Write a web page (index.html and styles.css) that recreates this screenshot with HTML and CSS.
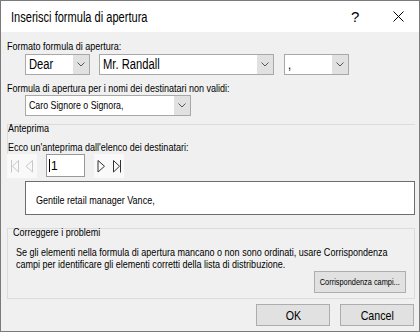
FILE: index.html
```html
<!DOCTYPE html>
<html lang="it">
<head>
  <meta charset="UTF-8">
  <title>Inserisci formula di apertura</title>
  <link rel="stylesheet" href="styles.css">
</head>
<body>

<div class="dialog">
  <div class="titlebar">
    <span class="title t">Inserisci formula di apertura</span>
    <span class="help">?</span>
    <svg class="close" width="11" height="11" viewBox="0 0 11 11">
      <path d="M0.5 0.5 L10.5 10.5 M10.5 0.5 L0.5 10.5" stroke="#000" stroke-width="1" fill="none"/>
    </svg>
  </div>

  <div class="content">
    <div class="label first-label"><span class="t">Formato formula di apertura:</span></div>
    <div class="combo-row">
      <div class="combo combo-dear">
        <span class="combo-text"><span class="t">Dear</span></span>
        <span class="combo-arrow"><svg width="8" height="5" viewBox="0 0 8 5"><path d="M0.5 0.5 L4 4 L7.5 0.5" stroke="#555" fill="none"/></svg></span>
      </div>
      <div class="combo combo-name">
        <span class="combo-text"><span class="t">Mr. Randall</span></span>
        <span class="combo-arrow"><svg width="8" height="5" viewBox="0 0 8 5"><path d="M0.5 0.5 L4 4 L7.5 0.5" stroke="#555" fill="none"/></svg></span>
      </div>
      <div class="combo combo-punct">
        <span class="combo-text"><span class="t">,</span></span>
        <span class="combo-arrow"><svg width="8" height="5" viewBox="0 0 8 5"><path d="M0.5 0.5 L4 4 L7.5 0.5" stroke="#555" fill="none"/></svg></span>
      </div>
    </div>

    <div class="label second-label"><span class="t">Formula di apertura per i nomi dei destinatari non validi:</span></div>
    <div class="combo combo-invalid">
      <span class="combo-text small"><span class="t">Caro Signore o Signora,</span></span>
      <span class="combo-arrow"><svg width="8" height="5" viewBox="0 0 8 5"><path d="M0.5 0.5 L4 4 L7.5 0.5" stroke="#555" fill="none"/></svg></span>
    </div>

    <div class="preview-group">
      <div class="preview-head">
        <div class="group-title"><span class="t">Anteprima</span></div>
        <div class="label preview-label"><span class="t">Ecco un'anteprima dall'elenco dei destinatari:</span></div>
      </div>
      <div class="nav-row">
        <svg class="nav-btns" width="30" height="24" viewBox="0 0 30 24">
          <path d="M4.5 6 V18.5 M11.5 6.5 L5.5 12.25 L11.5 18 Z M25.5 6.5 L19 12.25 L25.5 18 Z" stroke="#c8c8c8" fill="none"/>
        </svg>
        <div class="record-box"><span class="caret"></span>1</div>
        <svg class="nav-btns" width="30" height="24" viewBox="0 0 30 24">
          <path d="M4 6.5 L10.5 12.25 L4 18 Z M19.5 6.5 L25.5 12.25 L19.5 18 Z M26.5 6 V18.5" stroke="#333" fill="none"/>
        </svg>
      </div>
      <div class="preview-box"><span class="t">Gentile retail manager Vance,</span></div>
    </div>

    <div class="fix-group">
      <div class="group-title fix-title"><span class="t">Correggere i problemi</span></div>
      <div class="fix-text">
        <span class="t">Se gli elementi nella formula di apertura mancano o non sono ordinati, usare Corrispondenza</span>
        <span class="t">campi per identificare gli elementi corretti della lista di distribuzione.</span>
      </div>
      <div class="fix-actions">
        <button class="btn btn-small"><span class="t">Corrispondenza campi...</span></button>
      </div>
    </div>

    <div class="dialog-buttons">
      <button class="btn"><span class="t">OK</span></button>
      <button class="btn"><span class="t">Cancel</span></button>
    </div>
  </div>
</div>

</body>
</html>
```

FILE: styles.css
```css
body {
  margin: 0;
  font-family: "Liberation Sans", Arial, sans-serif;
  color: #000;
}

/* the dialog text is a narrow face: squeeze the glyphs horizontally */
.t {
  display: inline-block;
  white-space: nowrap;
  transform: scaleX(0.82);
  transform-origin: 0 50%;
}

.dialog {
  width: 420px;
  height: 332px;
  box-sizing: border-box;
  border: 1px solid #7a7a7a;
  background: #f0f0f0;
  display: flex;
  flex-direction: column;
  overflow: hidden;
}

.titlebar {
  flex-shrink: 0;
  height: 31px;
  background: #fff;
  display: flex;
  align-items: center;
  padding-left: 10px;
}

.title {
  font-size: 14px;
  transform: scaleX(0.79);
}

.help {
  margin-left: auto;
  width: 8px;
  text-align: center;
  font-size: 15px;
  margin-right: 34px;
}

.close {
  margin-right: 15px;
}

.content {
  flex: 1;
  display: flex;
  flex-direction: column;
  align-items: flex-start;
  padding: 0 4px 0 6px;
}

.content > * {
  flex-shrink: 0;
}

.label {
  font-size: 11px;
  line-height: 12px;
  height: 12px;
}

.first-label {
  margin-top: 8px;
}

.combo-row {
  display: flex;
  gap: 9px;
  margin: 2px 0 0 18px;
}

.combo {
  display: flex;
  height: 21px;
  box-sizing: border-box;
  border: 1px solid #a8a8a8;
  background: #fff;
}

.combo-text {
  flex: 1;
  font-size: 14px;
  line-height: 19px;
  padding-left: 3px;
  overflow: hidden;
}

.combo-text.small {
  font-size: 11px;
}

.combo-text .t {
  transform: scaleX(0.8);
}

.combo-arrow {
  width: 16px;
  background: #e1e1e1;
  display: flex;
  align-items: center;
  justify-content: center;
}

.combo-dear { width: 65px; }
.combo-name { width: 175px; }
.combo-punct { width: 65px; margin-left: 1px; }

.second-label {
  margin-top: 7px;
}

.combo-invalid {
  width: 166px;
  margin: 1px 0 0 18px;
}

.preview-group {
  align-self: stretch;
  margin-top: 8px;
  border-top: 1px solid #dcdcdc;
  display: flex;
  flex-direction: column;
  align-items: flex-start;
}

.preview-head {
  align-self: stretch;
  border-left: 1px solid #dcdcdc;
  padding-bottom: 1px;
}

.group-title {
  font-size: 11px;
  line-height: 12px;
  height: 12px;
  margin-top: -3px;
}

.preview-label {
  margin-top: 7px;
}

.nav-row {
  display: flex;
  gap: 9px;
}

.nav-btns {
  display: block;
  background: #f9f9f9;
}

.record-box {
  width: 39px;
  height: 23px;
  box-sizing: border-box;
  border: 1px solid #999;
  background: #fff;
  font-size: 12px;
  padding-left: 2px;
  display: flex;
  align-items: center;
}

.caret {
  width: 1px;
  height: 13px;
  background: #000;
  margin-right: 1px;
}

.preview-box {
  width: 390px;
  height: 34px;
  box-sizing: border-box;
  margin: 3px 0 0 18px;
  border: 1px solid #6d6d6d;
  background: #fff;
  font-size: 11px;
  line-height: 12px;
  padding: 12px 0 0 10px;
}

.fix-group {
  align-self: stretch;
  margin-top: 13px;
  border: 1px solid #dcdcdc;
  padding: 0 8px 5px 8px;
  display: flex;
  flex-direction: column;
}

.fix-title {
  margin-left: -3px;
}

.fix-text {
  margin-top: 8px;
  font-size: 11px;
  line-height: 12px;
  display: flex;
  flex-direction: column;
  align-items: flex-start;
}

.fix-actions {
  display: flex;
  justify-content: flex-end;
  margin-top: 1px;
}

.btn {
  width: 74px;
  height: 22px;
  border: 1px solid #adadad;
  background: #e1e1e1;
  font-family: inherit;
  font-size: 13px;
  color: #000;
  padding: 0;
  display: flex;
  align-items: center;
  justify-content: center;
}

.btn .t {
  transform-origin: 50% 50%;
}

.btn-small {
  width: 92px;
  font-size: 9px;
}

.dialog-buttons {
  align-self: stretch;
  display: flex;
  justify-content: flex-end;
  gap: 10px;
  margin-top: 5px;
  padding-right: 1px;
}
```
